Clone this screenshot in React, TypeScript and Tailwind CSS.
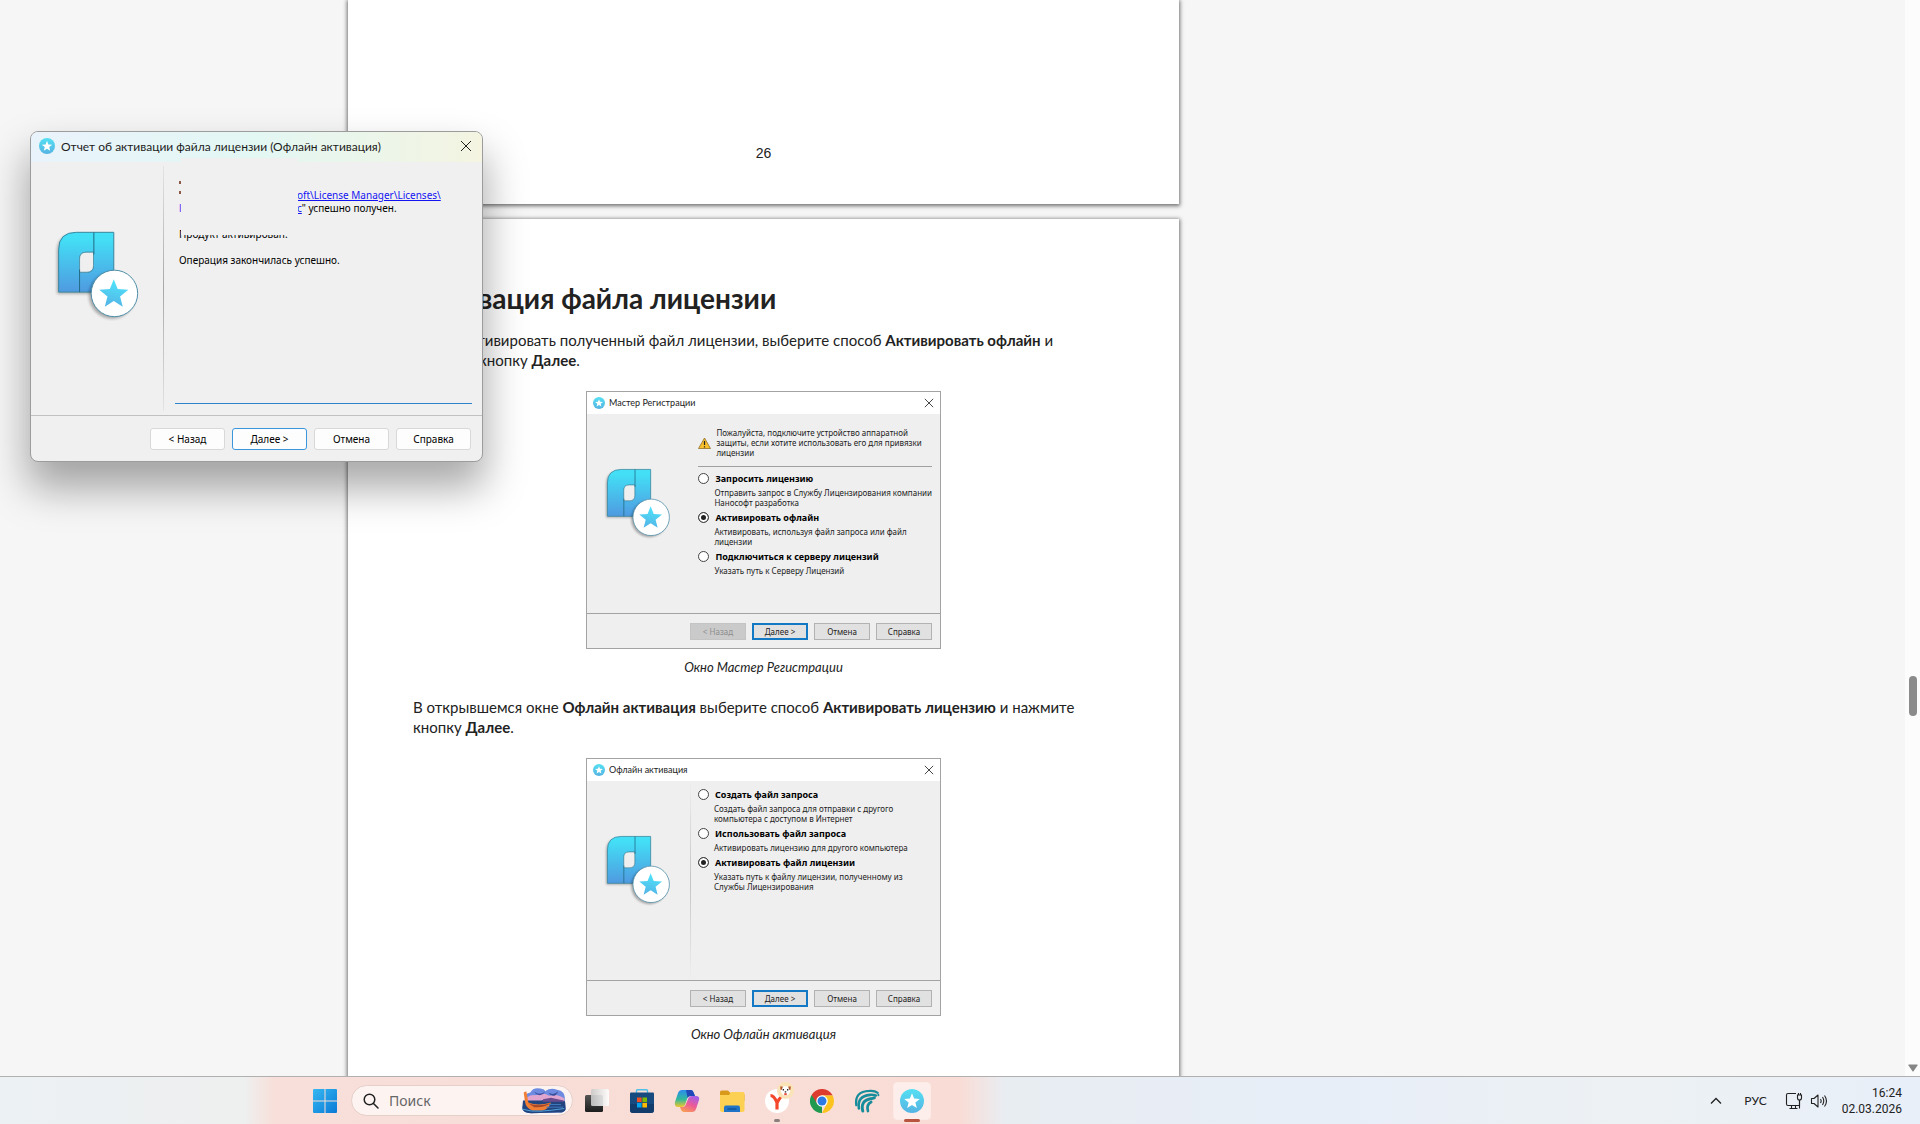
import type { ReactNode } from "react";

const STAR = "M0-46L11.8-16.2 43.7-14.2 19 6.2 27 37.2 0 20-27 37.2-19 6.2-43.7-14.2-11.8-16.2Z";

function ProductLogo({ id, className }: { id: string; className: string }) {
  return (
    <svg viewBox="40 55 265 280" className={className} aria-hidden="true">
      <defs>
        <linearGradient id={`${id}-body`} x1="0" y1="0" x2="0" y2="1">
          <stop offset="0.1" stopColor="#43dff6" />
          <stop offset="1" stopColor="#4f9ae0" />
        </linearGradient>
        <linearGradient id={`${id}-star`} x1="0.6" y1="0" x2="0.4" y2="1">
          <stop offset="0" stopColor="#4fe6fb" />
          <stop offset="1" stopColor="#53b4e6" />
        </linearGradient>
        <filter id={`${id}-blur`} x="-20%" y="-20%" width="140%" height="140%">
          <feGaussianBlur stdDeviation="5" />
        </filter>
      </defs>
      <path d="M52 253V125Q52 75 105 75H218V253Z" fill="#000" opacity="0.3" filter={`url(#${id}-blur)`} />
      <path
        fillRule="evenodd"
        d="M57 248V120Q57 68 110 68H223V248ZM120 188H142Q162 188 162 168V128H140Q120 128 120 148Z"
        fill={`url(#${id}-body)`}
        stroke="#3a87a0"
        strokeWidth="3"
      />
      <path d="M120 188H142Q162 188 162 168V128H140Q120 128 120 148Z" fill="#efefef" stroke="#3a87a0" strokeWidth="2" />
      <path d="M163 68V135M120 180V248" stroke="#226a85" strokeWidth="3" />
      <circle cx="218" cy="258" r="70" fill="#000" opacity="0.3" filter={`url(#${id}-blur)`} />
      <circle cx="225" cy="252" r="70" fill="#fff" stroke="#4e8ea8" strokeWidth="3" />
      <path d={STAR} transform="translate(223 255)" fill={`url(#${id}-star)`} />
    </svg>
  );
}

function StarBadge({ id, className }: { id: string; className: string }) {
  return (
    <svg viewBox="0 0 100 100" className={className} aria-hidden="true">
      <defs>
        <linearGradient id={id} x1="0" y1="0" x2="0" y2="1">
          <stop offset="0" stopColor="#55e0f3" />
          <stop offset="1" stopColor="#55b3e2" />
        </linearGradient>
      </defs>
      <circle cx="50" cy="50" r="50" fill={`url(#${id})`} />
      <path d={STAR} transform="translate(50 52) scale(.74)" fill="#fff" />
    </svg>
  );
}

function CloseButton({ className }: { className: string }) {
  return (
    <button aria-label="Закрыть" className="flex items-center justify-center">
      <svg viewBox="0 0 12 12" className={className} fill="none" stroke="#222" aria-hidden="true">
        <path d="M1 1L11 11M11 1L1 11" />
      </svg>
    </button>
  );
}

function FooterButton({ label, variant }: { label: string; variant?: "default" | "disabled" }) {
  const look =
    variant === "default"
      ? "border-2 border-[#1479c4] bg-[#e1e1e1] text-[#222]"
      : variant === "disabled"
        ? "border border-[#c4c4c4] bg-[#cacaca] text-[#8f8f8f]"
        : "border border-[#b2b2b2] bg-[#e1e1e1] text-[#222]";
  return (
    <button disabled={variant === "disabled"} className={`flex h-[17px] w-14 items-center justify-center ${look}`}>
      {label}
    </button>
  );
}

function Choice({ group, label, note, checked }: { group: string; label: string; note: ReactNode; checked?: boolean }) {
  return (
    <>
      <label className="flex h-[19px] items-center gap-[6px] text-[9px] font-bold text-black">
        <input
          type="radio"
          name={group}
          defaultChecked={checked}
          className="size-[11px] shrink-0 appearance-none rounded-full border border-[#444] bg-white checked:bg-[#222] checked:shadow-[inset_0_0_0_2px_#fff]"
        />
        {label}
      </label>
      <p className="ml-4 whitespace-nowrap">{note}</p>
    </>
  );
}

function WizardFigure({
  id,
  title,
  caption,
  backDisabled,
  children,
}: {
  id: string;
  title: string;
  caption: string;
  backDisabled?: boolean;
  children: ReactNode;
}) {
  return (
    <figure className="flex flex-col items-center">
      <div className="w-[355px] border border-[#a3a3a3] bg-[#efefef] text-[8px] leading-[10px] text-[#222]">
        <div className="flex h-[22px] items-center bg-white px-[6px] text-[9px]">
          <StarBadge id={`${id}-title`} className="mr-1 size-3" />
          <span className="grow font-['Lato',sans-serif] text-[9px]">{title}</span>
          <CloseButton className="size-[10px]" />
        </div>
        <div className="flex min-h-[199px]">
          <div className="flex w-[103px] shrink-0 pt-[52px] pl-4">
            <ProductLogo id={id} className="h-[73px] w-[69px]" />
          </div>
          <div className="w-px bg-linear-to-b from-[#efefef] via-[#c4c4c4] to-[#efefef]" />
          <div className="grow pr-2 pl-2">{children}</div>
        </div>
        <div className="flex justify-end gap-[6px] border-t border-[#a3a3a3] pt-[9px] pr-2 pb-2">
          <FooterButton label="< Назад" variant={backDisabled ? "disabled" : undefined} />
          <FooterButton label="Далее >" variant="default" />
          <FooterButton label="Отмена" />
          <FooterButton label="Справка" />
        </div>
      </div>
      <figcaption className="mt-2 font-['Lato',sans-serif] text-[13px] leading-5 text-[#222] italic">{caption}</figcaption>
    </figure>
  );
}

function DocumentView() {
  return (
    <div className="ml-[348px] w-[831px] font-['Noto_Sans',sans-serif] text-[#222]">
      <section className="flex h-[204px] items-end justify-center bg-white pb-[41px] shadow-[0_1px_4px_1px_rgba(0,0,0,0.55)]">
        <span className="font-['Liberation_Sans',sans-serif] text-[14px] leading-5">26</span>
      </section>
      <section className="mt-[15px] min-h-[900px] bg-white px-[65px] pt-[62px] font-['Lato',sans-serif] text-[15px] leading-5 shadow-[0_1px_4px_1px_rgba(0,0,0,0.55)]">
        <h1 className="text-[28px] leading-[34px] font-bold">Активация файла лицензии</h1>
        <p className="mt-[15px]">
          Чтобы активировать полученный файл лицензии, выберите способ <b>Активировать офлайн</b> и<br />
          нажмите кнопку <b>Далее</b>.
        </p>
        <div className="mt-[21px] font-['Noto_Sans',sans-serif]">
          <WizardFigure id="wizard" title="Мастер Регистрации" caption="Окно Мастер Регистрации" backDisabled>
            <div className="mb-[2px] flex items-center gap-[5px] border-b border-[#a0a0a0] pt-[14px] pb-[8px]">
              <svg viewBox="0 0 26 24" className="h-3 w-[13px] shrink-0" aria-hidden="true">
                <path d="M13 2L25 23H1Z" fill="#f9bf2c" stroke="#8a6a20" strokeWidth="1.5" strokeLinejoin="round" />
                <path d="M13 8V16M13 18.500V21" stroke="#222" strokeWidth="2.400" />
              </svg>
              <p className="whitespace-nowrap">
                Пожалуйста, подключите устройство аппаратной
                <br />
                защиты, если хотите использовать его для привязки
                <br />
                лицензии
              </p>
            </div>
            <Choice
              group="wizard"
              label="Запросить лицензию"
              note={
                <>
                  Отправить запрос в Службу Лицензирования компании
                  <br />
                  Нанософт разработка
                </>
              }
            />
            <Choice
              group="wizard"
              label="Активировать офлайн"
              checked
              note={
                <>
                  Активировать, используя файл запроса или файл
                  <br />
                  лицензии
                </>
              }
            />
            <Choice group="wizard" label="Подключиться к серверу лицензий" note="Указать путь к Серверу Лицензий" />
          </WizardFigure>
        </div>
        <p className="mt-5">
          В открывшемся окне <b>Офлайн активация</b> выберите способ <b>Активировать лицензию</b> и нажмите
          <br />
          кнопку <b>Далее</b>.
        </p>
        <div className="mt-[21px] font-['Noto_Sans',sans-serif]">
          <WizardFigure id="offline" title="Офлайн активация" caption="Окно Офлайн активация">
            <div className="-ml-px pt-1">
              <Choice
                group="offline"
                label="Создать файл запроса"
                note={
                  <>
                    Создать файл запроса для отправки с другого
                    <br />
                    компьютера с доступом в Интернет
                  </>
                }
              />
              <Choice group="offline" label="Использовать файл запроса" note="Активировать лицензию для другого компьютера" />
              <Choice
                group="offline"
                label="Активировать файл лицензии"
                checked
                note={
                  <>
                    Указать путь к файлу лицензии, полученному из
                    <br />
                    Службы Лицензирования
                  </>
                }
              />
            </div>
          </WizardFigure>
        </div>
      </section>
    </div>
  );
}

function DialogButton({ label, primary }: { label: string; primary?: boolean }) {
  return (
    <button
      className={`flex h-[22px] w-[75px] items-center justify-center rounded-[3px] border bg-[#fdfdfd] ${
        primary ? "border-[#3c96dc]" : "border-[#d8d8d8]"
      }`}
    >
      {label}
    </button>
  );
}

function ReportDialog() {
  return (
    <div
      role="dialog"
      aria-label="Отчет об активации файла лицензии"
      className="absolute top-[131px] left-[30px] w-[453px] overflow-clip rounded-lg border border-[#9c9c9c] bg-[#f0f0f0] font-['Noto_Sans',sans-serif] text-[10px] leading-[13px] text-black shadow-[0_24px_40px_2px_rgba(0,0,0,0.34)]"
    >
      <div className="flex h-[30px] items-center bg-linear-to-r from-[#e9f3fb] via-[#e3f7f3] to-[#f4f4e1] pr-[10px] pb-[2px] pl-2">
        <StarBadge id="report-title" className="mr-[6px] size-4" />
        <span className="grow font-['Lato',sans-serif] text-[12px] text-[#1c1c1c]">Отчет об активации файла лицензии (Офлайн активация)</span>
        <CloseButton className="size-3" />
      </div>
      <div className="flex h-[253px]">
        <div className="w-[132px] shrink-0 pt-[66px] pl-[22px]">
          <ProductLogo id="report" className="h-[93px] w-[88px]" />
        </div>
        <div className="my-1 w-px bg-linear-to-b from-[#e4e4e4] via-[#a8a8a8] to-[#e4e4e4]" />
        <div className="relative mt-[10px] mr-[10px] mb-[11px] ml-[11px] grow border-b border-[#2f83cb] pt-[9px] pl-1">
          <div className="h-[3px] w-[2px] bg-[#8d5a48]" />
          <div className="mt-[7px] h-[3px] w-[2px] bg-[#8d5a48]" />
          <div className="-mt-[5px] flex">
            <span className="w-[118px]" />
            <a href="#licenses" className="text-[#1414f0] underline">
              oft\License Manager\Licenses\
            </a>
          </div>
          <div className="flex">
            <span className="w-[118px] text-[#5c2ff0]">l</span>
            <a href="#licenses" className="text-[#1414f0] underline">
              c
            </a>
            <span>" успешно получен.</span>
          </div>
          <p className="mt-[13px]">Продукт активирован.</p>
          <p className="mt-[13px]">Операция закончилась успешно.</p>
          <div className="absolute -top-[14px] left-[6px] h-[77px] w-[117px] bg-[#f0f0f0]" />
        </div>
      </div>
      <div className="flex justify-end gap-[7px] border-t border-[#c0c0c0] pt-3 pr-[11px] pb-[11px]">
        <DialogButton label="< Назад" />
        <DialogButton label="Далее >" primary />
        <DialogButton label="Отмена" />
        <DialogButton label="Справка" />
      </div>
    </div>
  );
}

function TaskbarApp({ label, children }: { label: string; children: ReactNode }) {
  return (
    <button aria-label={label} className="relative flex h-12 w-[45px] items-center justify-center">
      {children}
    </button>
  );
}

function BoatPicture() {
  return (
    <svg viewBox="0 0 138 80" className="h-[27px] w-[46px]" aria-hidden="true">
      <path d="M12 36Q10 18 28 16Q36 0 58 4Q72 6 72 12Q90 0 108 8Q134 10 132 42L134 66Q130 78 110 76L30 78Q4 78 4 62Z" fill="#6d8be0" />
      <path d="M18 30Q30 22 44 24Q70 14 84 26Q110 18 130 34V44H14Z" fill="#e0a5cf" />
      <path d="M40 14Q56 26 72 14Q66 24 56 24Q46 24 40 14ZM82 16Q98 26 112 12Q106 26 96 26Q88 26 82 16Z" fill="#3d4f9c" />
      <path d="M6 40H60L80 36 132 42 134 66Q130 78 110 76L30 78Q4 78 4 62Z" fill="#22457f" />
      <path d="M66 36L90 32 128 40V44H66Z" fill="#6a4b8e" />
      <path d="M8 16L16 12 22 46Q50 58 90 46Q84 66 64 70H34Q14 62 12 44Z" fill="#f07f35" />
      <path d="M22 48Q50 60 88 48Q70 62 40 60Z" fill="#a6462a" />
      <path d="M4 66Q30 74 60 72T130 64" stroke="#4fa0d8" strokeWidth="3" fill="none" />
      <path d="M76 60H126M84 52H120" stroke="#3f77bb" strokeWidth="3" />
    </svg>
  );
}

function Taskbar() {
  return (
    <footer className="relative flex h-12 shrink-0 items-center border-t border-[#b0b0b0] bg-[linear-gradient(90deg,#ecf1f4_0,#eeefef_245px,#f8dfd9_275px,#f9dcd6_960px,#f0e6e6_985px,#e8edf2_1005px,#e8eef8_70%,#edf1f3_85%,#e8eff9_100%)] font-['Noto_Sans',sans-serif] text-[#222]">
      <button aria-label="Пуск" className="ml-[313px]">
        <svg viewBox="0 0 24 24" className="size-6" aria-hidden="true">
          <defs>
            <linearGradient id="start" x1="0" y1="0" x2="1" y2="1" gradientUnits="objectBoundingBox">
              <stop offset="0" stopColor="#35b8f2" />
              <stop offset="1" stopColor="#0b7ad6" />
            </linearGradient>
          </defs>
          <path d="M0 1Q0 0 1 0H11.500V11.500H0ZM12.500 0H23Q24 0 24 1V11.500H12.500ZM0 12.500H11.500V24H1Q0 24 0 23ZM12.500 12.500H24V23Q24 24 23 24H12.500Z" fill="url(#start)" />
        </svg>
      </button>
      <label className="ml-[14px] flex h-[31px] w-[222px] items-center rounded-full border border-[#e6cfc9] bg-[#fdf4f2] pr-[5px] pl-[11px]">
        <svg viewBox="0 0 16 16" className="size-4" fill="none" stroke="#222" strokeWidth="1.500" strokeLinecap="round" aria-hidden="true">
          <circle cx="6.500" cy="6.500" r="5.300" />
          <path d="M10.500 10.500L15 15" />
        </svg>
        <input aria-label="Поиск" placeholder="Поиск" className="ml-[10px] w-0 grow bg-transparent text-[14px] outline-none placeholder:text-[#666]" />
        <BoatPicture />
      </label>
      <div className="ml-px flex">
        <TaskbarApp label="Представление задач">
          <svg viewBox="0 0 26 24" className="h-6 w-[26px]" aria-hidden="true">
            <defs>
              <linearGradient id="tv-dark" x1="0" y1="0" x2="0" y2="1">
                <stop offset="0" stopColor="#555" />
                <stop offset="1" stopColor="#1c1c1c" />
              </linearGradient>
              <linearGradient id="tv-light" x1="0" y1="0" x2="1" y2="0">
                <stop offset="0" stopColor="#c9c9c9" />
                <stop offset="1" stopColor="#fff" />
              </linearGradient>
            </defs>
            <rect x="1" y="6" width="18" height="17" rx="1.500" fill="url(#tv-dark)" />
            <rect x="7" y="0" width="18" height="17" rx="1.500" fill="url(#tv-light)" opacity="0.900" />
          </svg>
        </TaskbarApp>
        <TaskbarApp label="Microsoft Store">
          <svg viewBox="0 0 24 24" className="size-6" aria-hidden="true">
            <path d="M6.500 5V1.800Q6.500 .8 7.500 .8H16.500Q17.500 .8 17.500 1.800V5" fill="none" stroke="#4cc0e8" strokeWidth="1.400" />
            <path d="M0 4.500Q0 3.500 1 3.500H23Q24 3.500 24 4.500V21Q24 24 21 24H3Q0 24 0 21Z" fill="#174a7e" />
            <path d="M0 15H24V21Q24 24 21 24H3Q0 24 0 21Z" fill="#123c6c" />
            <path d="M7 8.500H11.600V13.100H7Z" fill="#f25022" />
            <path d="M12.400 8.500H17V13.100H12.400Z" fill="#7fba00" />
            <path d="M7 13.900H11.600V18.500H7Z" fill="#00a4ef" />
            <path d="M12.400 13.900H17V18.500H12.400Z" fill="#ffb900" />
          </svg>
        </TaskbarApp>
        <TaskbarApp label="Copilot">
          <svg viewBox="0 0 26 24" className="h-6 w-[26px]" aria-hidden="true">
            <defs>
              <linearGradient id="cp-a" x1="0" y1="0" x2="0" y2="1">
                <stop offset="0" stopColor="#2b8cf0" />
                <stop offset="0.550" stopColor="#31b99a" />
                <stop offset="1" stopColor="#f3c62c" />
              </linearGradient>
              <linearGradient id="cp-b" x1="0.700" y1="0" x2="0.200" y2="1">
                <stop offset="0" stopColor="#a45fe8" />
                <stop offset="0.500" stopColor="#ee5a96" />
                <stop offset="1" stopColor="#f9a052" />
              </linearGradient>
            </defs>
            <path d="M8 1H17Q19 1 19.800 4L21 7H16.500Q14 7 13 10L11 16Q10 18 7.500 18H4Q0 18 1 13L4 4Q5 1 8 1Z" fill="url(#cp-a)" />
            <path d="M12 1H17Q19 1 19.800 4L21 7H16.500Q14.500 7 13.600 9Z" fill="#2148b8" />
            <path d="M18 23H9.500Q7.500 23 6.700 20L6 18H8.500Q11 18 12 15L14.500 9Q15.500 7 18 7H22Q26 7 25 11L22 20Q21 23 18 23Z" fill="url(#cp-b)" />
          </svg>
        </TaskbarApp>
        <TaskbarApp label="Проводник">
          <svg viewBox="0 0 26 24" className="h-6 w-[26px]" aria-hidden="true">
            <path d="M1 3Q1 1.500 2.500 1.500H9L12 4.500H24Q25.500 4.500 25.500 6V12H1Z" fill="#d99a1c" />
            <path d="M1 6H10L12 3H24Q25.500 3 25.500 4.500V21Q25.500 23 23.500 23H3Q1 23 1 21Z" fill="#fbd053" />
            <path d="M5 23V18.500Q5 16.500 7 16.500H19Q21 16.500 21 18.500V23Z" fill="#1f74c8" />
            <path d="M8.500 20H17.500" stroke="#0b4c93" strokeWidth="1.200" />
          </svg>
        </TaskbarApp>
        <TaskbarApp label="Яндекс Браузер">
          <svg viewBox="0 0 32 32" className="size-8" aria-hidden="true">
            <circle cx="16" cy="16" r="12" fill="#fff" />
            <path d="M9.500 10.500Q13 10.500 16 17.500V24.500M22.500 10.500Q19.500 11 16 18" fill="none" stroke="#f4472b" strokeWidth="3.200" />
          </svg>
          <svg viewBox="0 0 18 18" className="absolute top-[5px] right-[5px] size-[17px]" aria-hidden="true">
            <circle cx="9" cy="9" r="9" fill="#fbe3b8" />
            <path d="M5 5.500Q9 3.500 13 5.500L14 9.500Q13 14 9 14.500Q5 14 4 9.500Z" fill="#fff" />
            <path d="M3.500 4.500L6.200 5 5 8.500 3.600 8ZM14.500 4.500L11.800 5 13 8.500 14.400 8Z" fill="#b5562a" />
            <path d="M6 7.500H7.400V9H6ZM10.600 7.500H12V9H10.600ZM8.200 9.800H9.800V11H8.200Z" fill="#222" />
            <path d="M7.700 11.800H10.300V14H7.700Z" fill="#e84a3c" />
          </svg>
          <span className="absolute bottom-[3px] h-[3px] w-[6px] rounded-full bg-[#8a7f7d]" />
        </TaskbarApp>
        <TaskbarApp label="Google Chrome">
          <svg viewBox="0 0 48 48" className="size-6" aria-hidden="true">
            <path d="M24 24V48A24 24 0 0 1 3.200 12Z" fill="#219a50" />
            <path d="M24 13H45.300L44.800 12A24 24 0 0 0 3.200 12L14.500 29.500Z" fill="#dc3b2e" />
            <path d="M33.500 29.500L24 48A24 24 0 0 0 45.300 13H24Z" fill="#fcc31e" />
            <circle cx="24" cy="24" r="11.500" fill="#fff" />
            <circle cx="24" cy="24" r="9" fill="#2d7ae5" />
          </svg>
        </TaskbarApp>
        <TaskbarApp label="Сетевой клиент">
          <svg viewBox="0 0 78 74" className="h-6 w-[26px]" fill="none" stroke="#178d9c" strokeLinecap="round" aria-hidden="true">
            <path d="M6 50Q0 8 46 6Q62 4 72 12" strokeWidth="7" />
            <path d="M14 60Q8 22 48 18Q58 17 66 20" strokeWidth="8" />
            <path d="M26 68Q18 36 50 30Q58 29 62 27" strokeWidth="9" />
            <path d="M42 68Q36 48 52 40" strokeWidth="8" />
            <path d="M74 18V19" strokeWidth="6" />
          </svg>
        </TaskbarApp>
        <TaskbarApp label="Активация лицензии">
          <span className="flex h-[38px] w-[38px] items-center justify-center rounded-[4px] border border-[#fbeae6] bg-[#fdeeeb]">
            <StarBadge id="task-star" className="size-6" />
          </span>
          <span className="absolute bottom-[3px] h-[3px] w-4 rounded-full bg-[#b85440]" />
        </TaskbarApp>
      </div>
      <div className="ml-auto flex items-center pr-[18px] text-[12px]">
        <button aria-label="Показать скрытые значки" className="mr-[22px]">
          <svg viewBox="0 0 12 8" className="h-2 w-3" fill="none" stroke="#222" strokeWidth="1.300" aria-hidden="true">
            <path d="M1 6.500L6 1.500 11 6.500" />
          </svg>
        </button>
        <button className="mr-[18px] font-['Lato',sans-serif] text-[12px]">РУС</button>
        <button aria-label="Сеть и звук" className="mr-[14px] flex items-center gap-[7px]">
          <svg viewBox="0 0 18 18" className="size-[18px]" fill="none" stroke="#222" strokeWidth="1.100" aria-hidden="true">
            <path d="M11 1.500H3Q1.500 1.500 1.500 3V12Q1.500 13.500 3 13.500H14.500V9M6.500 13.500V16.500M10.500 13.500V16.500M4.500 16.500H12.500" />
            <path d="M12.500 3H16.500V6Q16.500 8 14.500 8Q12.500 8 12.500 6ZM13.500 3V1M15.500 3V1M14.500 8V16.500" />
          </svg>
          <svg viewBox="0 0 18 16" className="h-4 w-[18px]" fill="none" stroke="#222" strokeWidth="1.100" strokeLinejoin="round" aria-hidden="true">
            <path d="M1.500 5.500H4L8 2V14L4 10.500H1.500ZM10.500 6Q11.800 8 10.500 10M12.500 4Q15 8 12.500 12M14.500 2.500Q18.500 8 14.500 13.500" />
          </svg>
        </button>
        <time className="text-right font-['Roboto',sans-serif] leading-4">
          16:24
          <br />
          02.03.2026
        </time>
      </div>
    </footer>
  );
}

export default function App() {
  return (
    <div className="relative flex h-screen flex-col overflow-hidden bg-[#f6f6f6]">
      <main className="flex min-h-0 grow">
        <div className="min-w-0 grow overflow-hidden">
          <DocumentView />
        </div>
        <div className="relative w-[15px] shrink-0 bg-[#fcfcfc]">
          <div className="absolute top-[676px] left-1 h-10 w-2 rounded-full bg-[#8b8b8b]" />
          <svg viewBox="0 0 10 8" className="absolute bottom-1 left-[3px] h-2 w-[10px]" aria-hidden="true">
            <path d="M1 .5H9Q10 .5 9.500 1.500L5.700 7Q5 8 4.300 7L.5 1.500Q0 .5 1 .5Z" fill="#858585" />
          </svg>
        </div>
      </main>
      <Taskbar />
      <ReportDialog />
    </div>
  );
}
